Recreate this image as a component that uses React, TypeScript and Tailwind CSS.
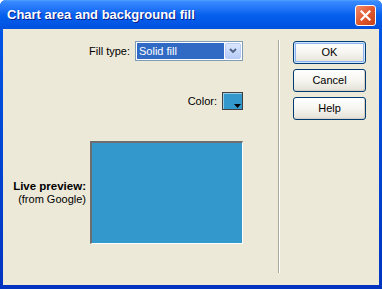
import React from "react";

function XpButton({ label, isDefault }: { label: string; isDefault?: boolean }) {
  return (
    <button
      className={
        "w-[73px] h-[23px] rounded-[3px] border border-[#003C74] bg-gradient-to-b from-[#FFFFFF] via-[#F6F5F0] to-[#E3E1D6] text-[11px] text-black leading-none " +
        (isDefault
          ? "shadow-[inset_0_0_0_1px_#CEE7FF,inset_0_0_0_2px_#8EB3F0]"
          : "shadow-[inset_-1px_-1px_0_#D6D0C5]")
      }
    >
      {label}
    </button>
  );
}

export default function App() {
  return (
    <div
      className="w-[382px] h-[289px] flex flex-col bg-[#0055E5] rounded-t-[6px] overflow-hidden"
      style={{ fontFamily: '"Liberation Sans", Arial, sans-serif' }}
    >
      {/* Title bar */}
      <div className="h-[29px] shrink-0 flex items-center justify-between pl-[7px] pr-[6px] bg-gradient-to-b from-[#3A8CFF] via-[#0660EE] to-[#0050DE] border-t border-[#4C9BFF]">
        <span className="text-white font-bold text-[13px] [text-shadow:1px_1px_0_#0A1E8C]">
          Chart area and background fill
        </span>
        <div className="w-[21px] h-[21px] rounded-[3px] border border-white bg-gradient-to-br from-[#F08A6A] via-[#E25A2E] to-[#C4401A] flex items-center justify-center">
          <svg width="11" height="11" viewBox="0 0 11 11">
            <path d="M1.5 1.5 L9.5 9.5 M9.5 1.5 L1.5 9.5" stroke="white" strokeWidth="2.2" strokeLinecap="square" />
          </svg>
        </div>
      </div>

      {/* Client area */}
      <div className="flex-1 flex px-[3px] pb-[4px] bg-gradient-to-b from-[#0055E5] to-[#0034C0]">
        <div className="flex-1 flex bg-[#ECE9D8] text-[11px] text-black">
          {/* Left panel */}
          <div className="w-[240px] flex flex-col items-end">
            <div className="mt-[12px] flex items-center gap-[5px]">
              <span>Fill type:</span>
              <div className="w-[108px] h-[20px] border border-[#7F9DB9] bg-white flex items-center p-[1px]">
                <div className="flex-1 h-full bg-[#316AC5] text-white flex items-center pl-[2px]">
                  Solid fill
                </div>
                <div className="w-[16px] h-full ml-[1px] rounded-[2px] border border-[#B9CBF5] bg-gradient-to-b from-[#DCE7FE] to-[#B6CBF6] flex items-center justify-center">
                  <svg width="8" height="6" viewBox="0 0 8 6">
                    <path d="M1 1 L4 4 L7 1" stroke="#4D6185" strokeWidth="1.8" fill="none" />
                  </svg>
                </div>
              </div>
            </div>

            <div className="mt-[31px] flex items-center gap-[5px]">
              <span>Color:</span>
              <div className="w-[21px] h-[18px] border border-[#404040] bg-[#3399CC] shadow-[inset_1px_1px_0_#ffffff80] relative">
                <svg className="absolute right-[1px] bottom-[1px]" width="7" height="4" viewBox="0 0 7 4">
                  <path d="M0 0 H7 L3.5 4 Z" fill="black" />
                </svg>
              </div>
            </div>

            <div className="mt-[31px] flex items-center gap-[4px]">
              <div className="text-right leading-[13px]">
                <div className="font-bold text-[11.5px]">Live preview:</div>
                <div>(from Google)</div>
              </div>
              <div className="w-[153px] h-[103px] bg-[#3399CC] border-t-2 border-l-2 border-t-[#6E6E6E] border-l-[#6E6E6E] border-b border-r border-b-white border-r-white" />
            </div>
          </div>

          {/* Separator */}
          <div className="ml-[35px] mt-[11px] mb-[12px] w-[2px] flex">
            <div className="w-px bg-[#ACA899]" />
            <div className="w-px bg-white" />
          </div>

          {/* Buttons */}
          <div className="ml-[13px] mt-[12px] flex flex-col gap-[5px]">
            <XpButton label="OK" isDefault />
            <XpButton label="Cancel" />
            <XpButton label="Help" />
          </div>
        </div>
      </div>
    </div>
  );
}
